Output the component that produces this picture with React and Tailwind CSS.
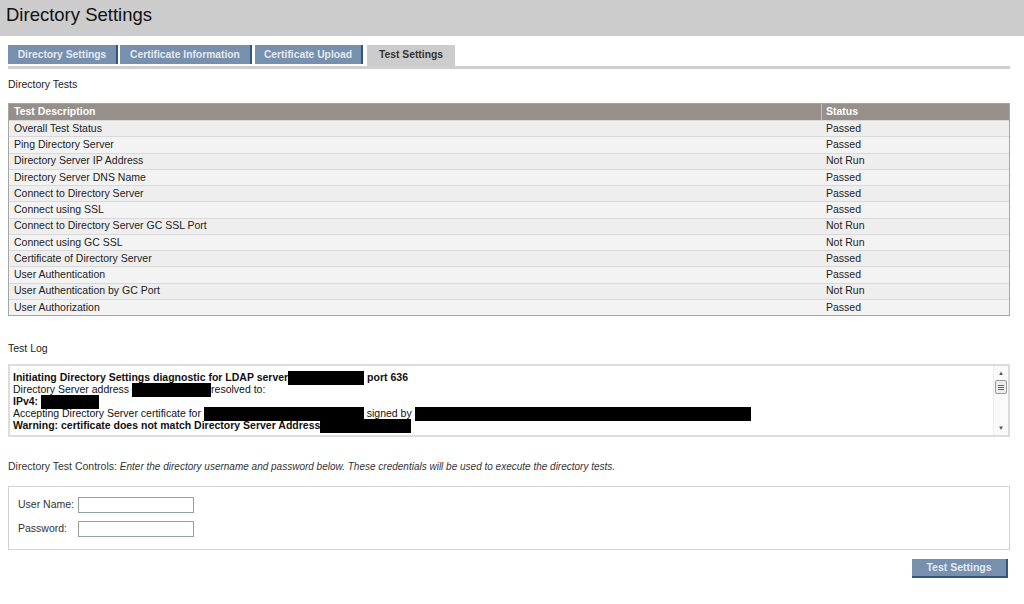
import React from 'react';

const tests = [
  ['Overall Test Status', 'Passed'],
  ['Ping Directory Server', 'Passed'],
  ['Directory Server IP Address', 'Not Run'],
  ['Directory Server DNS Name', 'Passed'],
  ['Connect to Directory Server', 'Passed'],
  ['Connect using SSL', 'Passed'],
  ['Connect to Directory Server GC SSL Port', 'Not Run'],
  ['Connect using GC SSL', 'Not Run'],
  ['Certificate of Directory Server', 'Passed'],
  ['User Authentication', 'Passed'],
  ['User Authentication by GC Port', 'Not Run'],
  ['User Authorization', 'Passed'],
];

const tabs = ['Directory Settings', 'Certificate Information', 'Certificate Upload'];
const tabWidths = ['w-[110px]', 'w-[132px]', 'w-[108px]'];

// black box covering redacted values in the log
const Redact = ({ w }) => (
  <span className={`inline-block h-[14px] -my-px bg-black align-[-3px] ${w}`} />
);

const App = () => {
  return (
    <div className="w-[1024px] h-[604px] bg-white text-[#222] text-[10.5px] font-['Liberation_Sans',Arial,sans-serif] overflow-hidden">
      {/* Page header */}
      <div className="h-[36px] bg-[#cccccc] flex items-center pl-[6px]">
        <h1 className="text-[18.5px] text-[#111] leading-none -mt-[6px]">Directory Settings</h1>
      </div>

      {/* Tabs */}
      <div className="mx-[8px] w-[1002px] mt-[9px]">
        <div className="flex items-start h-[21px] gap-[2px]">
          {tabs.map((t, i) => (
            <div
              key={t}
              className={`${tabWidths[i]} h-[19px] bg-[#7690ad] border-r-2 border-[#34557c] flex items-center justify-center text-[#e3eaf2] font-bold text-[10.3px] ${i === 2 ? 'ml-[1px]' : ''}`}
            >
              {t}
            </div>
          ))}
          <div className="ml-[2px] w-[88px] h-[21px] bg-[#cccccc] flex items-center justify-center pb-[2px] font-bold text-[10.3px] text-[#333]">
            Test Settings
          </div>
        </div>
        <div className="h-[3px] bg-[#cfcfcf]" />
      </div>

      <div className="px-[8px] w-[1018px]">
        <div className="mt-[9px] h-[12px] leading-[12px]">Directory Tests</div>

        {/* Test table */}
        <div className="mt-[13px] border border-[#a6a6a6]">
          <div className="flex h-[16px] bg-[#978f89] text-white font-bold items-center">
            <div className="w-[813px] pl-[5px] border-r border-[#c9c3be] h-full flex items-center">Test Description</div>
            <div className="pl-[4px]">Status</div>
          </div>
          {tests.map(([name, status], i) => (
            <div
              key={name}
              className={`flex h-[16.25px] items-center border-t border-[#d9d9d9] ${i % 2 === 0 ? 'bg-[#eeeeee]' : 'bg-[#f3f3f3]'}`}
            >
              <div className="w-[813px] pl-[5px]">{name}</div>
              <div className="pl-[4px]">{status}</div>
            </div>
          ))}
        </div>

        <div className="mt-[26px] h-[12px] leading-[12px]">Test Log</div>

        {/* Test log */}
        <div className="mt-[10px] h-[73px] border-2 border-[#dcdcdc] flex">
          <div className="flex-1 pl-[3px] pt-[5px] leading-[12px] text-[#111] whitespace-nowrap overflow-hidden">
            <div className="font-bold h-[12px]">
              Initiating Directory Settings diagnostic for LDAP server<Redact w="w-[76px]" /> port 636
            </div>
            <div className="h-[12px]">
              Directory Server address <Redact w="w-[79px]" />resolved to:
            </div>
            <div className="font-bold h-[12px]">
              IPv4: <Redact w="w-[58px]" />
            </div>
            <div className="h-[12px]">
              Accepting Directory Server certificate for <Redact w="w-[160px]" /> signed by <Redact w="w-[336px]" />
            </div>
            <div className="font-bold h-[12px]">
              Warning: certificate does not match Directory Server Address<Redact w="w-[91px]" />
            </div>
          </div>
          {/* scrollbar */}
          <div className="w-[15px] flex flex-col items-center border-l border-[#ececec] bg-[#fafafa]">
            <div className="h-[14px] flex items-center text-[6px] text-[#555]">▲</div>
            <div className="w-[12px] h-[14px] border border-[#9a9a9a] rounded-[2px] bg-[#ececec] flex flex-col items-center justify-center gap-[1px]">
              <div className="w-[6px] h-px bg-[#666]" />
              <div className="w-[6px] h-px bg-[#666]" />
              <div className="w-[6px] h-px bg-[#666]" />
            </div>
            <div className="flex-1" />
            <div className="h-[14px] flex items-center text-[6px] text-[#555]">▼</div>
          </div>
        </div>

        <div className="mt-[23px] h-[12px] leading-[12px] text-[#333]">
          Directory Test Controls: <i className="text-[10px]">Enter the directory username and password below. These credentials will be used to execute the directory tests.</i>
        </div>

        {/* Credentials */}
        <div className="mt-[14px] h-[64px] border border-[#d2d2d2] pl-[9px] pt-[10px] flex flex-col gap-[8px] text-[#333]">
          <div className="flex items-center h-[16px]">
            <span className="w-[60px]">User Name:</span>
            <input className="w-[116px] h-[16px] border border-[#8fa596] bg-white outline-none" />
          </div>
          <div className="flex items-center h-[16px]">
            <span className="w-[60px]">Password:</span>
            <input type="password" className="w-[116px] h-[16px] border border-[#8fa596] bg-white outline-none" />
          </div>
        </div>

        <div className="flex justify-end mt-[9px] pr-[2px]">
          <button className="w-[96px] h-[19px] bg-[#7690ad] border-r-2 border-b-2 border-[#34557c] text-[#e3eaf2] font-bold text-[10.5px]">
            Test Settings
          </button>
        </div>
      </div>
    </div>
  );
};

export default App;
